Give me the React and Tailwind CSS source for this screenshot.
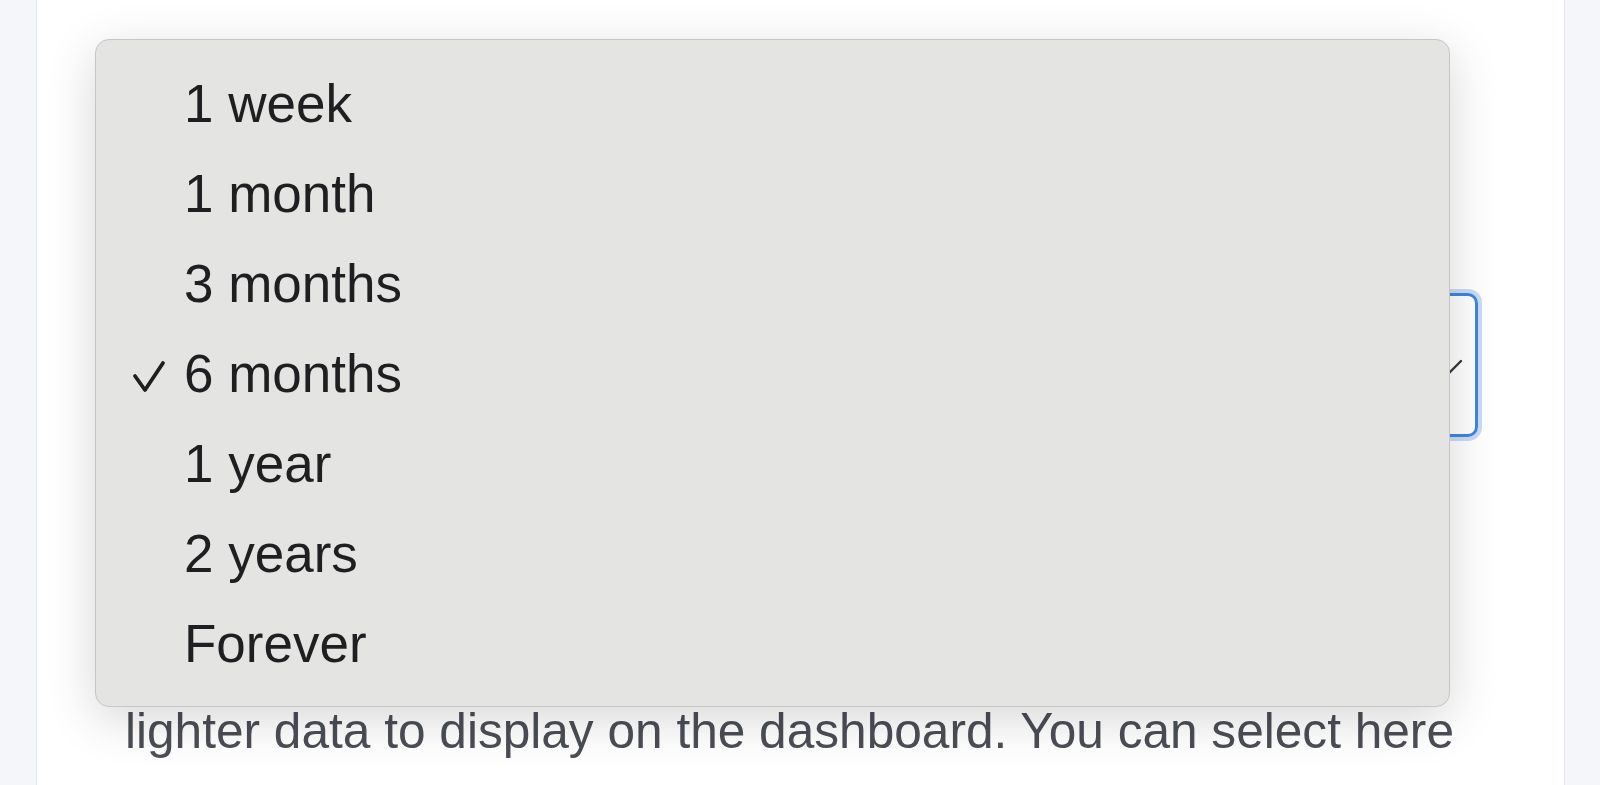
import React from "react";

const options = ["1 week", "1 month", "3 months", "6 months", "1 year", "2 years", "Forever"];

const App = () => {
  const selected = "6 months";

  return (
    <div
      className="h-[785px] w-[1600px] overflow-hidden bg-[#f4f6fa] pl-[36px] pr-[35px]"
      style={{ fontFamily: '"Liberation Sans", Arial, sans-serif' }}
    >
      <div className="relative h-full border-x border-[#e3e7ee] bg-white pl-[88px] pr-[86px] pt-[293px]">
        {/* select underneath the open menu */}
        <div className="relative h-[144px] rounded-[10px] border-[3px] border-[#3f86e0] ring-4 ring-[#c9dcf5]">
          <svg
            className="absolute right-[11px] top-[61px] h-[20px] w-[30px]"
            viewBox="0 0 30 20"
            fill="none"
            stroke="#3a3a3c"
            strokeWidth="2.4"
            strokeLinecap="round"
          >
            <path d="M3 4 L15 16 L27 4" />
          </svg>
        </div>
        <p className="mt-[270px] whitespace-nowrap text-[49.6px] leading-none text-[#4b4e55]">
          lighter data to display on the dashboard. You can select here
        </p>

        {/* open dropdown menu */}
        <div className="absolute left-[58px] top-[39px] w-[1355px] rounded-[14px] border border-[#c6c6c6] bg-[#e4e4e3] pb-[17px] pt-[19px] shadow-[0_12px_50px_rgba(0,0,0,0.16)]">
          {options.map((opt) => (
            <div
              key={opt}
              className="relative h-[90px] pl-[88px] text-[53px] leading-[90px] text-[#1f1f21]"
            >
              {opt === selected && (
                <svg
                  className="absolute left-[36px] top-[31px] h-[34px] w-[34px]"
                  viewBox="0 0 34 34"
                  fill="none"
                  stroke="#1f1f21"
                  strokeWidth="3.8"
                  strokeLinecap="round"
                  strokeLinejoin="round"
                >
                  <path d="M3 16 L13 30 L31 3" />
                </svg>
              )}
              {opt}
            </div>
          ))}
        </div>
      </div>
    </div>
  );
};

export default App;
